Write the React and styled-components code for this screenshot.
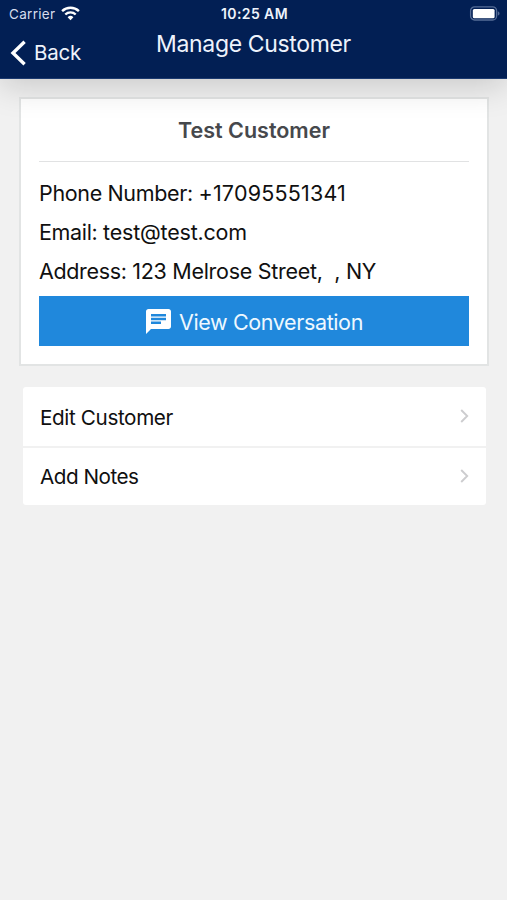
import React from 'react'
import styled, { createGlobalStyle } from 'styled-components'

const GlobalStyle = createGlobalStyle`
    * {
        box-sizing: border-box;
    }

    body {
        margin: 0;
        background-color: #f1f1f1;
        font-family: Inter, "Liberation Sans", sans-serif;
        color: #101010;
    }
`;

const Screen = styled.div`
    height: 900px;
    overflow: hidden;
    background-color: #f1f1f1;
`;

const Header = styled.header`
    position: relative;
    z-index: 1;
    height: 79px;
    background-color: #021f54;
    border-bottom: 1px solid #1c3a70;
    color: #eef3fc;
    box-shadow: 0 6px 34px rgba(0, 0, 0, 0.18);
`;

const StatusBar = styled.div`
    display: grid;
    grid-template-columns: 1fr auto 1fr;
    align-items: center;
    height: 27px;
    padding: 0 7px 0 9px;
`;

const Carrier = styled.div`
    display: flex;
    align-items: center;
    gap: 6px;
    font-size: 13.5px;
    letter-spacing: 0.3px;
    color: #d5dded;
`;

const Time = styled.div`
    font-size: 14px;
    font-weight: 600;
    letter-spacing: 0.4px;
`;

const Battery = styled.svg`
    justify-self: end;
`;

const NavBar = styled.div`
    display: grid;
    grid-template-columns: 1fr auto 1fr;
    height: 51px;
    padding: 0 10px;
`;

const BackButton = styled.div`
    display: flex;
    align-items: center;
    gap: 8px;
    font-size: 20.5px;
    letter-spacing: -0.2px;
    cursor: pointer;
`;

const NavTitle = styled.div`
    padding-top: 2px;
    font-size: 23px;
    line-height: 30px;
    letter-spacing: -0.35px;
`;

const Content = styled.main`
    padding: 18px 18px 0 19px;
`;

const Card = styled.section`
    height: 269px;
    padding: 0 18px;
    background-color: #fff;
    border: 2px solid #e2e4e4;
`;

const CardTitle = styled.div`
    height: 63px;
    line-height: 62px;
    text-align: center;
    font-size: 21.5px;
    font-weight: 600;
    color: #46484c;
    border-bottom: 1px solid #e1e2e3;
`;

const Details = styled.div`
    padding: 12px 0 5px;
`;

const Detail = styled.div`
    height: 39px;
    line-height: 39px;
    font-size: 21.5px;
    white-space: pre;
    letter-spacing: -0.35px;
`;

const DetailValue = styled.span`
    letter-spacing: ${({ $spacing }) => $spacing};
`;

const ConversationButton = styled.div`
    display: flex;
    align-items: center;
    justify-content: center;
    gap: 8px;
    height: 50px;
    padding-left: 1px;
    background-color: #2088dc;
    color: #eef8ff;
    font-size: 21.5px;
    letter-spacing: -0.38px;
    cursor: pointer;
`;

const ButtonText = styled.span`
    padding-top: 2px;
`;

const Menu = styled.section`
    margin: 21px 3.5px 0 3.5px;
    background-color: #fff;
    border-radius: 3px;
    overflow: hidden;
`;

const MenuItem = styled.div`
    display: flex;
    align-items: center;
    justify-content: space-between;
    height: 59px;
    padding: 1px 17px 0 17.5px;
    font-size: 20.7px;
    letter-spacing: ${({ $spacing }) => $spacing};
    cursor: pointer;

    & + & {
        padding-top: 0;
        border-top: 2px solid #f1f1f1;
    }
`;

const Chevron = styled.svg`
    margin-bottom: 2px;
`;

const WifiIcon = () => (
    <svg width="19" height="15" viewBox="0 0 19 15" fill="none" stroke="#fff" strokeWidth="2.4">
        <path d="M1.1 5.2a12 12 0 0 1 16.8 0" />
        <path d="M4.3 8.5a7.5 7.5 0 0 1 10.4 0" />
        <path d="M9.5 14.3l-2.9-3a4.1 4.1 0 0 1 5.8 0z" fill="#fff" stroke="none" />
    </svg>
)

const BatteryIcon = () => (
    <Battery width="31" height="15" viewBox="0 0 31 15">
        <rect x="1.6" y="0.8" width="26" height="13.2" rx="4" fill="none" stroke="#566d96" strokeWidth="1.3" />
        <rect x="3.8" y="3" width="21.8" height="9.2" rx="1.5" fill="#fff" />
        <path d="M28.8 5.2c2.3 0.8 2.3 3.6 0 4.4z" fill="#566d96" />
    </Battery>
)

const BackIcon = () => (
    <svg width="16" height="26" viewBox="0 0 16 26" fill="none" stroke="#fff" strokeWidth="3.4">
        <path d="M14.6 1.8L3 13l11.6 11.2" />
    </svg>
)

const ChatIcon = () => (
    <svg width="25" height="25" viewBox="2 2 20 20" fill="#fff">
        <path d="M20 2H4c-1.1 0-1.99.9-1.99 2L2 22l4-4h14c1.1 0 2-.9 2-2V4c0-1.1-.9-2-2-2zM6 9h12v2H6V9zm8 5H6v-2h8v2zm4-6H6V6h12v2z" />
    </svg>
)

const ChevronIcon = () => (
    <Chevron width="9" height="14" viewBox="0 0 9 14" fill="none" stroke="#cdcdcf" strokeWidth="1.9">
        <path d="M1.2 1l6 6-6 6" />
    </Chevron>
)

const App = () => {

    const details = [
        {
            label: "Phone Number: ",
            value: "+17095551341",
            spacing: "0.2px"
        }, {
            label: "Email: ",
            value: "test@test.com",
            spacing: "-0.2px"
        }, {
            label: "Address: ",
            value: "123 Melrose Street,  , NY",
            spacing: "-0.28px"
        }
    ]

    const menuItems = [
        {
            name: "Edit Customer",
            spacing: "-0.38px"
        }, {
            name: "Add Notes",
            spacing: "-0.5px"
        }
    ]

    return (
        <Screen>
            <GlobalStyle />
            <Header>
                <StatusBar>
                    <Carrier>
                        Carrier
                        <WifiIcon />
                    </Carrier>
                    <Time>10:25 AM</Time>
                    <BatteryIcon />
                </StatusBar>
                <NavBar>
                    <BackButton>
                        <BackIcon />
                        Back
                    </BackButton>
                    <NavTitle>Manage Customer</NavTitle>
                </NavBar>
            </Header>
            <Content>
                <Card>
                    <CardTitle>Test Customer</CardTitle>
                    <Details>
                        {details.map((item) => (
                            <Detail key={item.label}>
                                {item.label}
                                <DetailValue $spacing={item.spacing}>{item.value}</DetailValue>
                            </Detail>
                        ))}
                    </Details>
                    <ConversationButton>
                        <ChatIcon />
                        <ButtonText>View Conversation</ButtonText>
                    </ConversationButton>
                </Card>
                <Menu>
                    {menuItems.map((item) => (
                        <MenuItem key={item.name} $spacing={item.spacing}>
                            {item.name}
                            <ChevronIcon />
                        </MenuItem>
                    ))}
                </Menu>
            </Content>
        </Screen>
    )
}

export default App
